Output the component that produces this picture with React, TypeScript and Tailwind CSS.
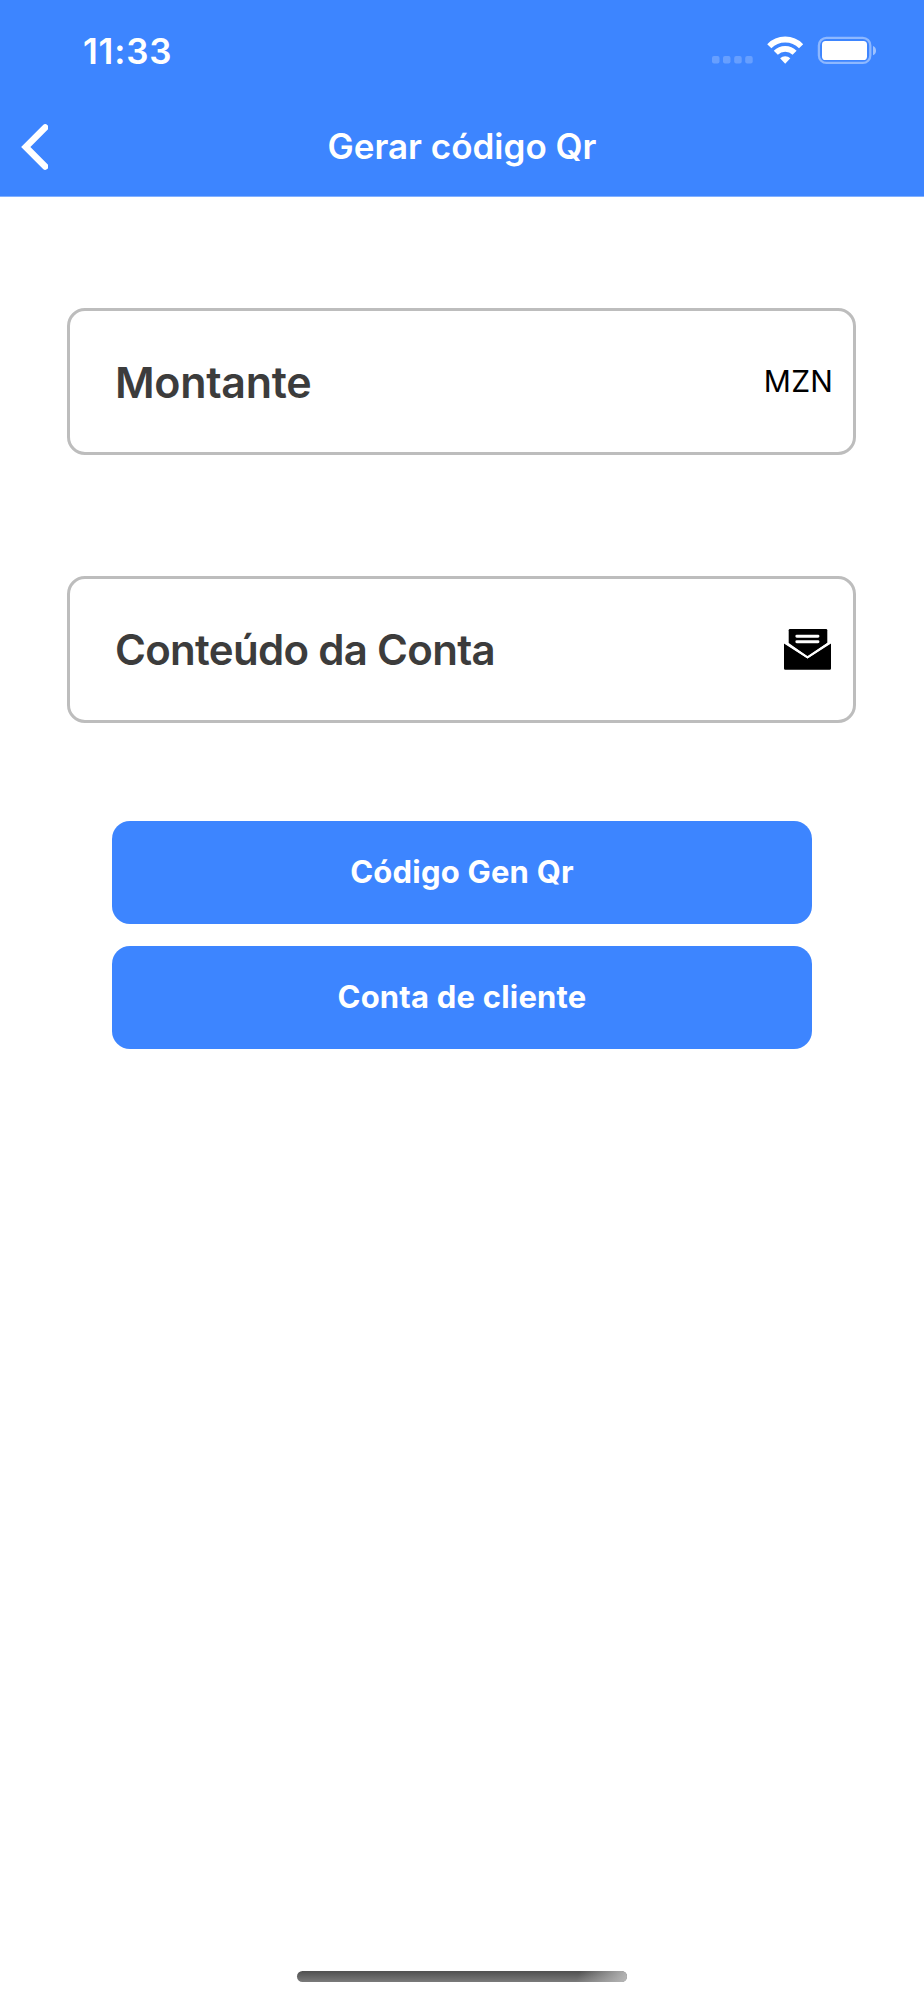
import React from "react";

interface FieldProps {
  label: string;
  labelClass: string;
  children: React.ReactNode;
}

const StatusBar: React.FC = () => {
  return (
    <div className="flex h-[100px] items-center justify-between pl-[83px] pr-[48px]">
      <p className="pt-px text-[35px] leading-[42px] font-semibold tracking-[0.8px]">
        11:33
      </p>
      <svg width="166" height="32" viewBox="0 0 166 32" fill="none">
        {/* signal */}
        <g fill="#fff" fillOpacity="0.22">
          <rect x="2" y="22" width="7.5" height="7.5" rx="2" />
          <rect x="13" y="22" width="7.5" height="7.5" rx="2" />
          <rect x="24.2" y="22" width="7.5" height="7.5" rx="2" />
          <rect x="35.2" y="22" width="7.5" height="7.5" rx="2" />
        </g>
        {/* wifi */}
        <g stroke="#fff" strokeWidth="5.8">
          <path d="M59.3 12.2a22.2 22.2 0 0 1 31.8 0" />
          <path d="M65.8 18.7a13.4 13.4 0 0 1 18.8 0" />
        </g>
        <path d="M70.1 24.3a7.3 7.3 0 0 1 10.2 0L75.2 29.8Z" fill="#fff" />
        {/* battery */}
        <rect x="108.9" y="3.9" width="51.4" height="25" rx="7.5" stroke="#fff" strokeOpacity="0.42" strokeWidth="2.3" />
        <rect x="112" y="7" width="45" height="19" rx="3.6" fill="#fff" />
        <path d="M163 12c4 1.400 4 8 0 9.200Z" fill="#fff" fillOpacity="0.5" />
      </svg>
    </div>
  );
};

const Field: React.FC<FieldProps> = ({ label, labelClass, children }) => {
  return (
    <div className="flex h-[147px] items-center justify-between rounded-[18px] border-[3px] border-[#bdbdbd] pl-[45px] pr-[21px]">
      <p className={`leading-[52px] font-semibold text-[#3c3c3c] ${labelClass}`}>
        {label}
      </p>
      {children}
    </div>
  );
};

const Button: React.FC<{ title: string }> = ({ title }) => {
  return (
    <button className="h-[103px] w-full rounded-[18px] bg-[#3d85ff] text-[31px] font-bold tracking-[0.2px] text-white">
      {title}
    </button>
  );
};

const App: React.FC = () => {
  return (
    <div className="flex h-[2000px] w-[924px] flex-col bg-white font-['Inter',sans-serif]">
      <header className="h-[197px] border-b border-[#81b0ff] bg-[#3d85ff] text-white">
        <StatusBar />
        <div className="grid h-[94px] grid-cols-[80px_1fr_80px] items-center">
          <svg className="ml-[20px]" width="28" height="48" viewBox="0 0 28 48" fill="none">
            <path d="M25.200 4.500 5.800 24l19.400 19.500" stroke="#fff" strokeWidth="6.600" strokeLinecap="round" />
          </svg>
          <h1 className="pb-0.5 text-center text-[35px] leading-[42px] font-semibold">
            Gerar código Qr
          </h1>
        </div>
      </header>
      <main className="flex flex-1 flex-col pt-[111px] pr-[68px] pl-[67px]">
        <div className="flex flex-col gap-[121px]">
          <Field label="Montante" labelClass="text-[43px] tracking-[-0.3px]">
            <p className="-mr-px pb-0.5 text-[30px] leading-[36px] tracking-[0.2px] text-black">
              MZN
            </p>
          </Field>
          <Field label="Conteúdo da Conta" labelClass="text-[42px] tracking-[-0.7px]">
            <svg className="mr-px" width="47" height="42" viewBox="0 0 47 42">
              <path d="M6 0h36q1.300 0 1.300 1.300V14L23.500 27.500 4.700 14V1.300Q4.700 0 6 0Z" />
              <path d="M0 14.500 23.500 29.500 47 14.500V39.400q0 1.300-1.300 1.300H1.300q-1.300 0-1.300-1.300Z" />
              <path d="M1 13.300 23.500 28.300 46 13.300" fill="none" stroke="#fff" strokeWidth="2.200" />
              <path d="M12.800 7.300h21.200M12.800 12.700h21.200" stroke="#fff" strokeWidth="2.900" strokeLinecap="round" />
            </svg>
          </Field>
        </div>
        <div className="mt-[98px] flex flex-col gap-[22px] pr-[44px] pl-[45px]">
          <Button title="Código Gen Qr" />
          <Button title="Conta de cliente" />
        </div>
      </main>
      <footer className="flex justify-center pb-[18px]">
        <div className="flex h-[11px] w-[330px] justify-end overflow-hidden rounded-full bg-linear-to-b from-[#505050] to-[#7b7b7b]">
          <div className="w-[60px] bg-[linear-gradient(110deg,transparent_20%,#b8b8b8)]" />
        </div>
      </footer>
    </div>
  );
};

export default App;
